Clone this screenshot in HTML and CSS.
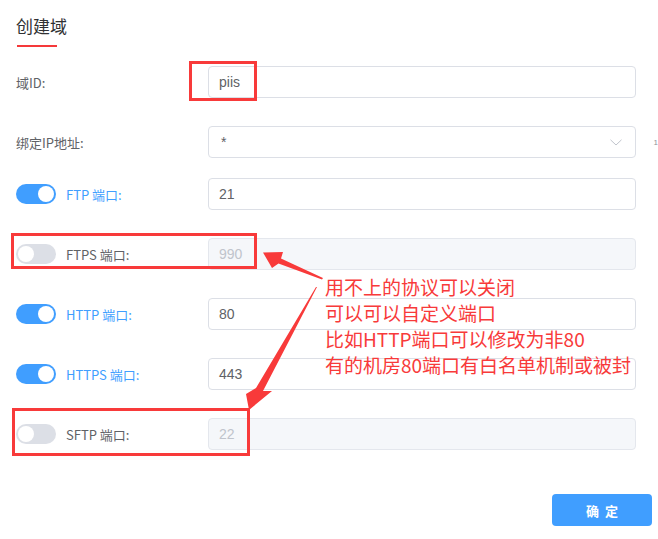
FILE: index.html
```html
<!DOCTYPE html>
<html lang="zh-CN">
<head>
<meta charset="utf-8">
<title>创建域</title>
<link rel="stylesheet" href="styles.css">
</head>
<body>
<div class="page">
  <h2 class="title">创建域</h2>
  <div class="title-bar"></div>

  <div class="form">
    <div class="row">
      <div class="label">域ID:</div>
      <div class="input">piis</div>
    </div>
    <div class="row row-tight">
      <div class="label">绑定IP地址:</div>
      <div class="input select">
        <span>*</span>
        <svg class="chev" width="12" height="7" viewBox="0 0 12 7"><path d="M0.5 0.8 L6 6 L11.5 0.8" fill="none" stroke="#c0c4cc" stroke-width="1"/></svg>
      </div>
      <span class="tip">1</span>
    </div>
    <div class="row">
      <div class="label"><span class="switch on"><i></i></span><span class="lbl-on">FTP 端口:</span></div>
      <div class="input">21</div>
    </div>
    <div class="row">
      <div class="label"><span class="switch"><i></i></span><span>FTPS 端口:</span></div>
      <div class="input disabled">990</div>
    </div>
    <div class="row">
      <div class="label"><span class="switch on"><i></i></span><span class="lbl-on">HTTP 端口:</span></div>
      <div class="input">80</div>
    </div>
    <div class="row">
      <div class="label"><span class="switch on"><i></i></span><span class="lbl-on">HTTPS 端口:</span></div>
      <div class="input">443</div>
    </div>
    <div class="row">
      <div class="label"><span class="switch"><i></i></span><span>SFTP 端口:</span></div>
      <div class="input disabled">22</div>
    </div>
  </div>

  <div class="footer"><button class="btn">确定</button></div>

  <div class="mark mark-id"></div>
  <div class="mark mark-ftps"></div>
  <div class="mark mark-sftp"></div>

  <svg class="arrows" width="658" height="539" viewBox="0 0 658 539">
    <polygon points="323,278 281,258.5 283,252 263,252.5 272,268 278.5,263.5 322,279.5" fill="#f83a3a"/>
    <polygon points="317,287 263,391 272,391 249,410 246,394 256,388 316,287" fill="#f83a3a"/>
  </svg>

  <div class="note">
    <div>用不上的协议可以关闭</div>
    <div>可以可以自定义端口</div>
    <div>比如HTTP端口可以修改为非80</div>
    <div>有的机房80端口有白名单机制或被封</div>
  </div>
</div>
</body>
</html>
```

FILE: styles.css
```css
html, body {
  margin: 0;
  padding: 0;
  background: #ffffff;
}
body {
  width: 658px;
  height: 539px;
  overflow: hidden;
  font-family: "Liberation Sans", "Noto Sans CJK SC", sans-serif;
}
.page {
  position: relative;
  width: 658px;
  height: 539px;
  box-sizing: border-box;
  padding: 14px 0 0 16px;
}
.title {
  margin: 0;
  font-family: "Noto Sans CJK SC", sans-serif;
  font-size: 17px;
  font-weight: normal;
  line-height: 24px;
  color: #303133;
}
.title-bar {
  margin-top: 7px;
  margin-left: 1px;
  width: 40px;
  height: 2px;
  background: #f5393a;
}
.form {
  margin-top: 19px;
  display: flex;
  flex-direction: column;
  gap: 28px;
}
.row {
  display: flex;
  align-items: center;
  height: 32px;
}
.row-tight {
  margin-bottom: -8px;
}
.label {
  width: 192px;
  flex: none;
  display: flex;
  align-items: center;
  gap: 10px;
  font-family: "Noto Sans CJK SC", sans-serif;
  font-size: 13px;
  color: #606266;
}
.lbl-on {
  color: #409eff;
}
.switch {
  position: relative;
  width: 40px;
  height: 20px;
  border-radius: 10px;
  background: #dcdfe6;
  flex: none;
}
.switch i {
  position: absolute;
  top: 2px;
  left: 2px;
  width: 16px;
  height: 16px;
  border-radius: 50%;
  background: #ffffff;
}
.switch.on {
  background: #409eff;
}
.switch.on i {
  left: 22px;
}
.input {
  width: 428px;
  height: 32px;
  box-sizing: border-box;
  border: 1px solid #dcdfe6;
  border-radius: 4px;
  padding: 0 10px;
  font-size: 14px;
  line-height: 30px;
  color: #606266;
  background: #ffffff;
}
.input.disabled {
  background: #f5f7fa;
  border-color: #e4e7ed;
  color: #c0c4cc;
}
.select {
  display: flex;
  align-items: center;
  justify-content: space-between;
  padding-left: 12px;
  padding-right: 13px;
}
.chev {
  display: block;
}
.tip {
  margin-left: 18px;
  font-size: 8px;
  color: #909399;
}
.footer {
  margin-top: 44px;
  display: flex;
  justify-content: flex-end;
  padding-right: 6px;
}
.btn {
  width: 100px;
  height: 32px;
  border: none;
  border-radius: 4px;
  background: #409eff;
  color: #ffffff;
  font-family: "Noto Sans CJK SC", sans-serif;
  font-size: 13px;
  font-weight: bold;
  letter-spacing: 6px;
  padding: 0 0 0 6px;
}
.mark {
  position: absolute;
  box-sizing: border-box;
  border: 3px solid #f83a3a;
}
.mark-id {
  left: 189px;
  top: 61px;
  width: 68px;
  height: 40px;
}
.mark-ftps {
  left: 11px;
  top: 233px;
  width: 246px;
  height: 36px;
}
.mark-sftp {
  left: 12px;
  top: 408px;
  width: 238px;
  height: 48px;
}
.arrows {
  position: absolute;
  left: 0;
  top: 0;
}
.note {
  position: absolute;
  left: 325px;
  top: 274px;
  font-family: "Noto Sans CJK SC", sans-serif;
  font-size: 19px;
  line-height: 26px;
  color: #f83a3a;
  white-space: nowrap;
}
```
